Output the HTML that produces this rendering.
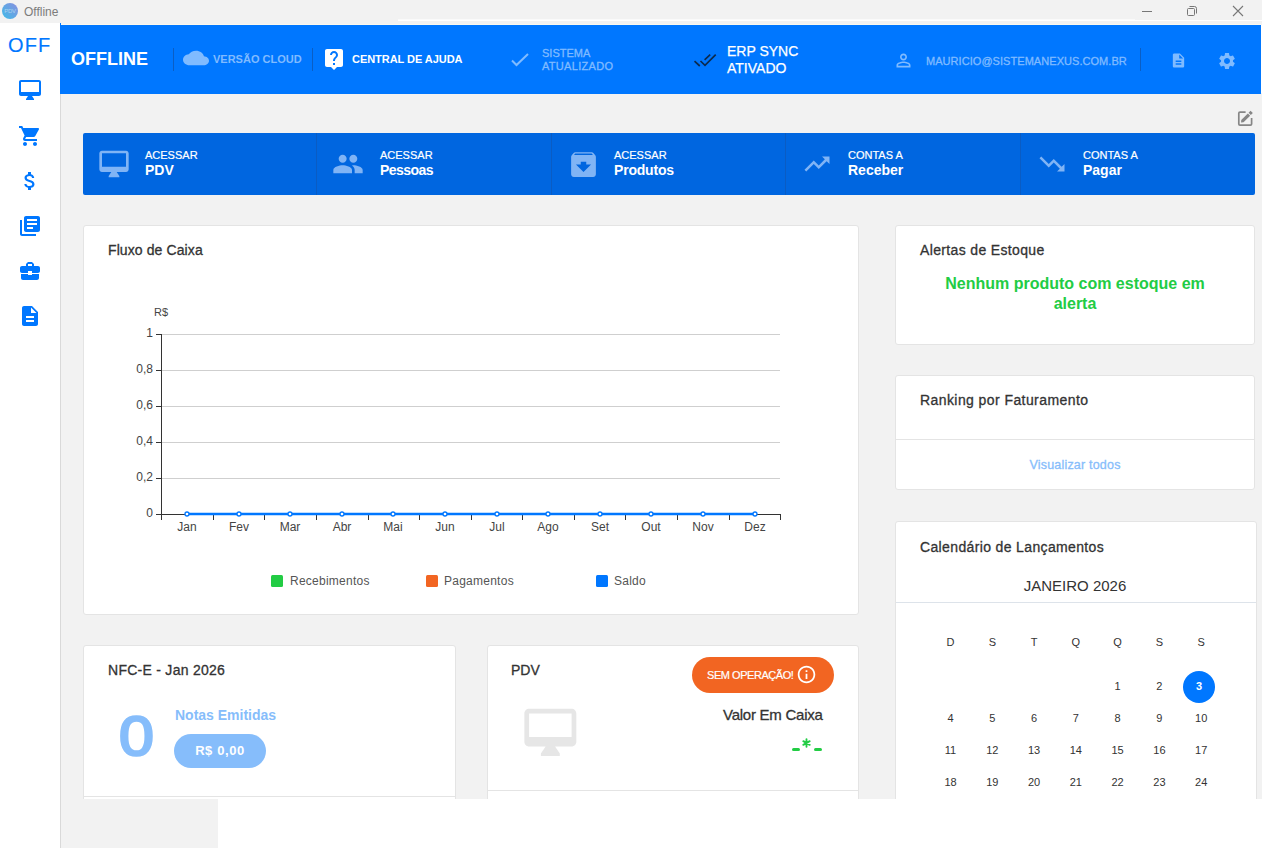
<!DOCTYPE html>
<html><head><meta charset="utf-8">
<style>
*{margin:0;padding:0;box-sizing:border-box}
html,body{width:1262px;height:848px;overflow:hidden;background:#fff;font-family:"Liberation Sans",sans-serif}
.a{position:absolute;white-space:nowrap;line-height:1}
svg.i{position:absolute;display:block}
#clip{position:absolute;left:0;top:0;width:1262px;height:799px;overflow:hidden}
#titlebar{position:absolute;left:0;top:0;width:1262px;height:25px;background:#f2f2f2}
#sidebar{position:absolute;left:0;top:23px;width:60px;height:825px;background:#fff}
#sbborder{position:absolute;left:60px;top:93px;width:1px;height:755px;background:#d9d9d9}
#content{position:absolute;left:61px;top:93px;width:1201px;height:706px;background:#f2f2f2}
#bottomgray{position:absolute;left:61px;top:799px;width:157px;height:49px;background:#f2f2f2}
#header{position:absolute;left:60px;top:25px;width:1201px;height:69px;background:#0077ff}
.hdiv{position:absolute;top:48px;width:1px;height:23px;background:#0b5ec4}
.panel{position:absolute;background:#fff;border:1px solid #e4e4e4;border-radius:3px}
.pt{position:absolute;font-size:14px;color:#333;line-height:1;white-space:nowrap;-webkit-text-stroke:0.3px #333}
.cd{position:absolute;width:1px;top:133px;height:62px;background:#0a5cc4}
.cl{position:absolute;font-size:11px;color:#fff;line-height:1;white-space:nowrap;-webkit-text-stroke:0.2px #fff}
.cb{position:absolute;font-size:14px;font-weight:bold;color:#fff;line-height:1;white-space:nowrap}
</style></head>
<body>
<div id="titlebar"></div>
<div id="sidebar"></div>
<div id="sbborder"></div>
<div id="bottomgray"></div>

<!-- title bar -->
<div class="a" style="left:2px;top:3px;width:16px;height:16px;border-radius:50%;background:linear-gradient(225deg,#8a8fdf,#3dbbe8)"></div><div class="a" style="left:2px;top:8px;width:16px;text-align:center;font-size:6px;color:#a9d3f0;letter-spacing:-0.2px">PDV</div>
<div class="a" style="left:24px;top:6px;font-size:12px;color:#7c7c7c">Offline</div>
<div class="a" style="left:1142px;top:11px;width:10px;height:1px;background:#777"></div>
<svg class="i" style="left:1186px;top:5px" width="12" height="12" viewBox="0 0 12 12"><rect x="1.5" y="3.5" width="7" height="7" rx="1" fill="none" stroke="#777" stroke-width="1"/><path d="M3.5 1.5h5a2 2 0 0 1 2 2v5" fill="none" stroke="#777" stroke-width="1"/></svg>
<svg class="i" style="left:1232px;top:5px" width="12" height="12" viewBox="0 0 12 12"><path d="M1 1L11 11M11 1L1 11" stroke="#777" stroke-width="1.1"/></svg>
<div class="a" style="left:398px;top:20px;width:864px;height:1px;background:#fff"></div><div class="a" style="left:398px;top:19px;width:737px;height:1px;background:#fafafa"></div>

<!-- sidebar -->
<div class="a" style="left:8px;top:35px;font-size:20px;color:#0077ff;letter-spacing:1.1px;-webkit-text-stroke:0.15px #0077ff">OFF</div>
<svg class="i" style="left:18px;top:78px" width="24" height="24" viewBox="0 0 24 24"><path fill="#0077ff" d="M21 2H3c-1.1 0-2 .9-2 2v12c0 1.1.9 2 2 2h7l-2 3v1h8v-1l-2-3h7c1.1 0 2-.9 2-2V4c0-1.1-.9-2-2-2zm0 12H3V4h18v10z"/></svg>
<svg class="i" style="left:18px;top:124px" width="24" height="24" viewBox="0 0 24 24"><path fill="#0077ff" d="M7 18c-1.1 0-1.99.9-1.99 2S5.9 22 7 22s2-.9 2-2-.9-2-2-2zM1 2v2h2l3.6 7.59-1.35 2.45c-.16.28-.25.61-.25.96 0 1.1.9 2 2 2h12v-2H7.42c-.14 0-.25-.11-.25-.25l.03-.12.9-1.63h7.45c.75 0 1.410-.41 1.75-1.03l3.58-6.49c.08-.14.12-.31.12-.48 0-.55-.45-1-1-1H5.21l-.94-2H1zm16 16c-1.1 0-1.99.9-1.99 2s.89 2 1.99 2 2-.9 2-2-.9-2-2-2z"/></svg>
<svg class="i" style="left:18px;top:169px" width="24" height="24" viewBox="0 0 24 24"><path fill="#0077ff" d="M11.8 10.9c-2.27-.59-3-1.2-3-2.15 0-1.09 1.01-1.850 2.7-1.85 1.78 0 2.44.85 2.5 2.1h2.21c-.07-1.72-1.12-3.3-3.21-3.81V3h-3v2.16c-1.94.42-3.5 1.68-3.5 3.61 0 2.31 1.91 3.46 4.7 4.13 2.5.6 3 1.48 3 2.410 0 .69-.49 1.79-2.7 1.79-2.06 0-2.87-.92-2.98-2.1h-2.2c.12 2.19 1.76 3.42 3.68 3.83V21h3v-2.15c1.95-.37 3.5-1.5 3.5-3.55 0-2.84-2.43-3.81-4.7-4.4z"/></svg>
<svg class="i" style="left:18px;top:214px" width="24" height="24" viewBox="0 0 24 24"><path fill="#0077ff" d="M4 6H2v14c0 1.1.9 2 2 2h14v-2H4V6zm16-4H8c-1.1 0-2 .9-2 2v12c0 1.1.9 2 2 2h12c1.1 0 2-.9 2-2V4c0-1.1-.9-2-2-2zm-1 9H9V9h10v2zm-4 4H9v-2h6v2zm4-8H9V5h10v2z"/></svg>
<svg class="i" style="left:18px;top:259px" width="24" height="24" viewBox="0 0 24 24"><path fill="#0077ff" d="M10 16v-1H3.01L3 19c0 1.11.89 2 2 2h14c1.11 0 2-.89 2-2v-4h-7v1h-4zm10-9h-4.01V5l-2-2h-4l-2 2v2H4c-1.1 0-2 .9-2 2v3c0 1.11.89 2 2 2h6v-2h4v2h6c1.1 0 2-.9 2-2V9c0-1.1-.9-2-2-2zm-6 0h-4V5h4v2z"/></svg>
<svg class="i" style="left:18px;top:304px" width="24" height="24" viewBox="0 0 24 24"><path fill="#0077ff" d="M14 2H6c-1.1 0-1.99.9-1.99 2L4 20c0 1.1.89 2 1.99 2H18c1.1 0 2-.9 2-2V8l-6-6zm2 16H8v-2h8v2zm0-4H8v-2h8v2zm-3-5V3.5L18.5 9H13z"/></svg>

<div id="clip">
<div id="content"></div>
<div id="header"></div>
<div class="a" style="left:61px;top:24px;width:1200px;height:1px;background:#fbf8ee"></div>
<div class="a" style="left:60px;top:23px;width:1px;height:2px;background:#0077ff"></div>

<!-- header -->
<div class="a" style="left:71px;top:50px;font-size:18px;font-weight:bold;color:#fff">OFFLINE</div>
<div class="hdiv" style="left:173px"></div>
<svg class="i" style="left:183px;top:47px" width="26" height="22" viewBox="0 0 24 24" preserveAspectRatio="none"><path fill="#80bbff" d="M19.35 10.04C18.67 6.59 15.64 4 12 4 9.11 4 6.6 5.64 5.35 8.04 2.34 8.36 0 10.91 0 14c0 3.31 2.69 6 6 6h13c2.76 0 5-2.24 5-5 0-2.64-2.05-4.78-4.65-4.96z"/></svg>
<div class="a" style="left:213px;top:54px;font-size:11px;font-weight:bold;color:#80bbff">VERSÃO CLOUD</div>
<div class="hdiv" style="left:312px"></div>
<svg class="i" style="left:322px;top:47px" width="24" height="24" viewBox="0 0 24 24"><path fill="#fff" d="M19 2H5c-1.11 0-2 .9-2 2v14c0 1.1.89 2 2 2h4l3 3 3-3h4c1.1 0 2-.9 2-2V4c0-1.1-.9-2-2-2zm-6 16h-2v-2h2v2zm2.07-7.75l-.9.92C13.45 11.9 13 12.5 13 14h-2v-.5c0-1.1.45-2.1 1.17-2.83l1.24-1.26c.37-.36.59-.86.59-1.41 0-1.1-.9-2-2-2s-2 .9-2 2H8c0-2.21 1.79-4 4-4s4 1.79 4 4c0 .88-.36 1.68-.93 2.25z"/></svg>
<div class="a" style="left:352px;top:54px;font-size:11px;font-weight:bold;color:#fff;letter-spacing:-0.05px">CENTRAL DE AJUDA</div>
<svg class="i" style="left:510px;top:52px" width="20" height="16" viewBox="0 0 20 16"><path d="M2 8.5L6.5 13L18 2" fill="none" stroke="#80bbff" stroke-width="2"/></svg>
<div class="a" style="left:542px;top:48px;font-size:11px;color:#80bbff;letter-spacing:0px;-webkit-text-stroke:0.3px #80bbff">SISTEMA</div>
<div class="a" style="left:542px;top:61px;font-size:11px;color:#80bbff;letter-spacing:0.3px;-webkit-text-stroke:0.3px #80bbff">ATUALIZADO</div>
<svg class="i" style="left:693px;top:52px" width="25" height="16" viewBox="0 0 25 16"><path d="M1.5 9.2L6.8 14M7.5 9L12 13.3L22.7 2.6M11.6 7.9L17.2 2.6" fill="none" stroke="#0c2b4f" stroke-width="1.7"/></svg>
<div class="a" style="left:727px;top:44px;font-size:14px;color:#fff;-webkit-text-stroke:0.25px #fff">ERP SYNC</div>
<div class="a" style="left:727px;top:61px;font-size:14px;color:#fff;-webkit-text-stroke:0.25px #fff">ATIVADO</div>
<svg class="i" style="left:893px;top:50px" width="21" height="21" viewBox="0 0 24 24"><path fill="#80bbff" d="M12 5.9c1.16 0 2.1.94 2.1 2.1s-.94 2.1-2.1 2.1S9.9 9.16 9.9 8s.94-2.1 2.1-2.1m0 9c2.97 0 6.1 1.46 6.1 2.1v1.1H5.9V17c0-.64 3.13-2.1 6.1-2.1M12 4C9.790 4 8 5.79 8 8s1.79 4 4 4 4-1.79 4-4-1.79-4-4-4zm0 9c-2.67 0-8 1.34-8 4v3h16v-3c0-2.66-5.33-4-8-4z"/></svg>
<div class="a" style="left:926px;top:56px;font-size:11px;color:#80bbff;letter-spacing:0.05px;-webkit-text-stroke:0.3px #80bbff">MAURICIO@SISTEMANEXUS.COM.BR</div>
<div class="hdiv" style="left:1140px"></div>
<svg class="i" style="left:1170px;top:52px" width="17" height="17" viewBox="0 0 24 24"><path fill="#80bbff" d="M14 2H6c-1.1 0-1.99.9-1.99 2L4 20c0 1.1.89 2 1.99 2H18c1.1 0 2-.9 2-2V8l-6-6zm2 16H8v-2h8v2zm0-4H8v-2h8v2zm-3-5V3.5L18.5 9H13z"/></svg>
<svg class="i" style="left:1217px;top:51px" width="20" height="20" viewBox="0 0 24 24"><path fill="#80bbff" d="M19.14 12.94c.04-.3.06-.61.06-.94 0-.32-.02-.64-.07-.94l2.03-1.58c.18-.14.23-.41.12-.61l-1.92-3.32c-.12-.22-.37-.29-.59-.22l-2.39.96c-.5-.38-1.03-.7-1.62-.94l-.36-2.54c-.04-.24-.24-.41-.48-.41h-3.84c-.24 0-.43.17-.47.41l-.36 2.54c-.59.24-1.13.57-1.62.94l-2.39-.96c-.22-.08-.47 0-.59.22L2.74 8.87c-.12.21-.08.47.12.61l2.03 1.58c-.05.3-.09.63-.09.94s.02.64.07.94l-2.030 1.58c-.18.14-.23.41-.12.61l1.92 3.32c.12.22.37.29.59.22l2.39-.96c.5.38 1.03.7 1.62.94l.36 2.54c.05.24.24.41.48.41h3.84c.24 0 .44-.17.47-.41l.36-2.54c.59-.24 1.13-.56 1.62-.94l2.39.96c.22.08.47 0 .59-.22l1.92-3.32c.12-.22.07-.47-.12-.61l-2.01-1.58zM12 15.6c-1.98 0-3.6-1.62-3.6-3.6s1.62-3.6 3.6-3.6 3.6 1.62 3.6 3.6-1.62 3.6-3.6 3.6z"/></svg>

<!-- edit icon -->
<svg class="i" style="left:1236px;top:109px" width="19" height="19" viewBox="0 0 19 19"><path d="M9.6 3.1H4a1.2 1.2 0 0 0-1.2 1.2V14.9a1.2 1.2 0 0 0 1.2 1.2H14.4a1.2 1.2 0 0 0 1.2-1.2V9.1" fill="none" stroke="#868686" stroke-width="1.7"/><path d="M5.27 11.07L11.87 4.47L14.13 6.73L7.53 13.33L5.0 13.6Z" fill="#868686"/><path d="M12.58 3.76L14.56 1.78L16.82 4.04L14.84 6.02Z" fill="#868686"/></svg>
<!-- card bar -->
<div class="a" style="left:83px;top:133px;width:1172px;height:62px;background:#0066e0;border-radius:2px"></div>
<div class="cd" style="left:316px"></div>
<div class="cd" style="left:551px"></div>
<div class="cd" style="left:785px"></div>
<div class="cd" style="left:1020px"></div>

<svg class="i" style="left:98px;top:148px" width="32" height="32" viewBox="0 0 24 24"><path fill="#80b4f5" d="M21 2H3c-1.1 0-2 .9-2 2v12c0 1.1.9 2 2 2h7l-2 3v1h8v-1l-2-3h7c1.1 0 2-.9 2-2V4c0-1.1-.9-2-2-2zm0 12H3V4h18v10z"/></svg>
<div class="cl" style="left:145px;top:150px">ACESSAR</div>
<div class="cb" style="left:145px;top:163px">PDV</div>
<svg class="i" style="left:332px;top:148px" width="32" height="32" viewBox="0 0 24 24"><path fill="#80b4f5" d="M16 11c1.66 0 2.99-1.34 2.99-3S17.66 5 16 5c-1.66 0-3 1.34-3 3s1.34 3 3 3zm-8 0c1.66 0 2.99-1.34 2.99-3S9.66 5 8 5C6.34 5 5 6.34 5 8s1.34 3 3 3zm0 2c-2.33 0-7 1.17-7 3.5V19h14v-2.5c0-2.33-4.67-3.5-7-3.5zm8 0c-.29 0-.62.02-.97.05 1.16.84 1.97 1.97 1.97 3.45V19h6v-2.5c0-2.33-4.67-3.5-7-3.5z"/></svg>
<div class="cl" style="left:380px;top:150px">ACESSAR</div>
<div class="cb" style="left:380px;top:163px;letter-spacing:-0.55px">Pessoas</div>
<svg class="i" style="left:566.5px;top:147.5px" width="33" height="33" viewBox="0 0 24 24"><path fill="#80b4f5" d="M20.54 5.23l-1.39-1.68C18.88 3.21 18.47 3 18 3H6c-.47 0-.88.21-1.16.55L3.46 5.23C3.17 5.57 3 6.02 3 6.5V19c0 1.1.9 2 2 2h14c1.1 0 2-.9 2-2V6.5c0-.48-.17-.93-.46-1.27zM12 17.5L6.5 12H10v-2h4v2h3.5L12 17.5zM5.12 5l.81-1h12l.94 1H5.12z"/></svg>
<div class="cl" style="left:614px;top:150px">ACESSAR</div>
<div class="cb" style="left:614px;top:163px;letter-spacing:-0.2px">Produtos</div>
<svg class="i" style="left:802px;top:149px" width="30" height="30" viewBox="0 0 24 24"><path fill="#80b4f5" d="M16 6l2.29 2.29-4.88 4.88-4-4L2 16.59 3.41 18l6-6 4 4 6.3-6.29L22 12V6z"/></svg>
<div class="cl" style="left:848px;top:150px">CONTAS A</div>
<div class="cb" style="left:848px;top:163px">Receber</div>
<svg class="i" style="left:1037px;top:149px" width="30" height="30" viewBox="0 0 24 24"><path fill="#80b4f5" d="M16 18l2.29-2.29-4.88-4.88-4 4L2 7.41 3.41 6l6 6 4-4 6.3 6.29L22 12v6z"/></svg>
<div class="cl" style="left:1083px;top:150px">CONTAS A</div>
<div class="cb" style="left:1083px;top:163px">Pagar</div>

<!-- panels -->
<div class="panel" style="left:83px;top:225px;width:776px;height:390px"></div>
<div class="pt" style="left:108px;top:243px;letter-spacing:0.1px">Fluxo de Caixa</div>

<svg class="i" style="left:0;top:0" width="1262" height="848" viewBox="0 0 1262 848" font-family="Liberation Sans, sans-serif">
 <g stroke="#cfcfcf" stroke-width="1">
  <path d="M161 334.5H780M161 370.5H780M161 406.5H780M161 442.5H780M161 478.5H780"/>
 </g>
 <g stroke="#333" stroke-width="1" fill="none">
  <path d="M161.5 334V520M161 514.5H781"/>
  <path d="M156 334.5H161M156 370.5H161M156 406.5H161M156 442.5H161M156 478.5H161M156 514.5H161"/>
  <path d="M213.5 514V520M264.5 514V520M316.5 514V520M368.5 514V520M419.5 514V520M471.5 514V520M522.5 514V520M574.5 514V520M625.5 514V520M677.5 514V520M729.5 514V520M780.5 514V520"/>
 </g>
 <g font-size="12" fill="#444" text-anchor="end">
  <text x="153" y="337">1</text><text x="153" y="373">0,8</text><text x="153" y="409">0,6</text><text x="153" y="445">0,4</text><text x="153" y="481">0,2</text><text x="153" y="517">0</text>
 </g>
 <text x="154" y="316" font-size="11" fill="#444">R$</text>
 <g font-size="12" fill="#444" text-anchor="middle">
  <text x="187" y="531">Jan</text><text x="239" y="531">Fev</text><text x="290" y="531">Mar</text><text x="342" y="531">Abr</text><text x="393" y="531">Mai</text><text x="445" y="531">Jun</text><text x="497" y="531">Jul</text><text x="548" y="531">Ago</text><text x="600" y="531">Set</text><text x="651" y="531">Out</text><text x="703" y="531">Nov</text><text x="755" y="531">Dez</text>
 </g>
 <path d="M187 514H755" stroke="#0077ff" stroke-width="2.4"/>
 <g fill="#fff" stroke="#0077ff" stroke-width="1.3">
  <circle cx="187" cy="514" r="2"/><circle cx="239" cy="514" r="2"/><circle cx="290" cy="514" r="2"/><circle cx="342" cy="514" r="2"/><circle cx="393" cy="514" r="2"/><circle cx="445" cy="514" r="2"/><circle cx="497" cy="514" r="2"/><circle cx="548" cy="514" r="2"/><circle cx="600" cy="514" r="2"/><circle cx="651" cy="514" r="2"/><circle cx="703" cy="514" r="2"/><circle cx="755" cy="514" r="2"/>
 </g>
 <rect x="271" y="575" width="12" height="12" rx="1.5" fill="#22cc44"/>
 <rect x="426" y="575" width="12" height="12" rx="1.5" fill="#f26522"/>
 <rect x="596" y="575" width="12" height="12" rx="1.5" fill="#0077ff"/>
 <g font-size="12" fill="#555" letter-spacing="0.25">
  <text x="290" y="585">Recebimentos</text><text x="444" y="585">Pagamentos</text><text x="614" y="585">Saldo</text>
 </g>
</svg>

<div class="panel" style="left:895px;top:225px;width:360px;height:120px"></div>
<div class="pt" style="left:920px;top:243px;letter-spacing:0.35px">Alertas de Estoque</div>
<div class="a" style="left:895px;top:274px;width:360px;text-align:center;font-size:16px;line-height:20px;font-weight:bold;color:#22cc44;white-space:normal;padding:0 40px">Nenhum produto com estoque em alerta</div>

<div class="panel" style="left:895px;top:375px;width:360px;height:115px"></div>
<div class="pt" style="left:920px;top:393px;letter-spacing:0.42px">Ranking por Faturamento</div>
<div class="a" style="left:896px;top:439px;width:358px;height:1px;background:#e4e4e4"></div>
<div class="a" style="left:895px;top:459px;width:360px;text-align:center;font-size:12.5px;color:#86bdfb;letter-spacing:0.2px;-webkit-text-stroke:0.3px #86bdfb">Visualizar todos</div>

<div class="panel" style="left:895px;top:521px;width:362px;height:300px"></div>
<div class="pt" style="left:920px;top:540px;letter-spacing:0.36px">Calendário de Lançamentos</div>
<div class="a" style="left:895px;top:578px;width:360px;text-align:center;font-size:15px;color:#333">JANEIRO 2026</div>
<div class="a" style="left:896px;top:602px;width:360px;height:1px;background:#dde3ea"></div>
<div class="a" style="left:1183px;top:671px;width:32px;height:32px;border-radius:50%;background:#0077ff"></div>
<svg class="i" style="left:0;top:0" width="1262" height="848" viewBox="0 0 1262 848" font-family="Liberation Sans, sans-serif">
 <g font-size="11" fill="#333" text-anchor="middle">
  <text x="950.5" y="646">D</text><text x="992.3" y="646">S</text><text x="1034" y="646">T</text><text x="1075.8" y="646">Q</text><text x="1117.6" y="646">Q</text><text x="1159.4" y="646">S</text><text x="1201.2" y="646">S</text>
  <text x="1117.6" y="690">1</text><text x="1159.4" y="690">2</text><text x="1199" y="690" fill="#fff" font-weight="bold">3</text>
  <text x="950.5" y="722">4</text><text x="992.3" y="722">5</text><text x="1034" y="722">6</text><text x="1075.8" y="722">7</text><text x="1117.6" y="722">8</text><text x="1159.4" y="722">9</text><text x="1201.2" y="722">10</text>
  <text x="950.5" y="754">11</text><text x="992.3" y="754">12</text><text x="1034" y="754">13</text><text x="1075.8" y="754">14</text><text x="1117.6" y="754">15</text><text x="1159.4" y="754">16</text><text x="1201.2" y="754">17</text>
  <text x="950.5" y="786">18</text><text x="992.3" y="786">19</text><text x="1034" y="786">20</text><text x="1075.8" y="786">21</text><text x="1117.6" y="786">22</text><text x="1159.4" y="786">23</text><text x="1201.2" y="786">24</text>
 </g>
</svg>

<div class="panel" style="left:83px;top:645px;width:373px;height:170px"></div>
<div class="pt" style="left:108px;top:663px;letter-spacing:0.27px">NFC-E - Jan 2026</div>
<div class="a" style="left:84px;top:796px;width:371px;height:1px;background:#e4e4e4"></div>
<div class="a" style="left:119px;top:708px;font-size:56px;color:#86bdfb;-webkit-text-stroke:2.4px #86bdfb;transform:scaleX(1.12);transform-origin:0 0">0</div>
<div class="a" style="left:175px;top:708px;font-size:14px;font-weight:bold;color:#86bdfb">Notas Emitidas</div>
<div class="a" style="left:174px;top:734px;width:92px;height:34px;border-radius:17px;background:#86bdfb;color:#fff;font-size:13px;font-weight:bold;text-align:center;line-height:34px;letter-spacing:0.6px">R$ 0,00</div>

<div class="panel" style="left:487px;top:645px;width:372px;height:170px"></div>
<div class="pt" style="left:511px;top:663px">PDV</div>
<div class="a" style="left:488px;top:790px;width:370px;height:1px;background:#e4e4e4"></div>
<div class="a" style="left:692px;top:657px;width:142px;height:36px;border-radius:18px;background:#f26522"></div>
<div class="a" style="left:707px;top:670px;font-size:11px;color:#fff;letter-spacing:-0.45px;-webkit-text-stroke:0.2px #fff">SEM OPERAÇÃO!</div>
<svg class="i" style="left:796px;top:664px" width="21" height="21" viewBox="0 0 24 24"><path fill="#fff" d="M11 7h2v2h-2zm0 4h2v6h-2zm1-9C6.48 2 2 6.48 2 12s4.48 10 10 10 10-4.48 10-10S17.52 2 12 2zm0 18c-4.41 0-8-3.59-8-8s3.59-8 8-8 8 3.590 8 8-3.59 8-8 8z"/></svg>
<svg class="i" style="left:521.6px;top:703.9px" width="56.7" height="56.7" viewBox="0 0 24 24"><path fill="#e6e6e6" d="M21 2H3c-1.1 0-2 .9-2 2v12c0 1.1.9 2 2 2h7l-2 3v1h8v-1l-2-3h7c1.1 0 2-.9 2-2V4c0-1.1-.9-2-2-2zm0 12H3V4h18v10z"/></svg>
<div class="a" style="left:723px;top:707px;font-size:15px;color:#333;letter-spacing:-0.25px;-webkit-text-stroke:0.3px #333">Valor Em Caixa</div>
<div class="a" style="left:792px;top:748px;width:8px;height:3px;border-radius:1.5px;background:#22cc44"></div><div class="a" style="left:814px;top:748px;width:8px;height:3px;border-radius:1.5px;background:#22cc44"></div><svg class="i" style="left:802px;top:738px" width="9" height="10" viewBox="0 0 9 10"><path d="M4.5 1.3V8.7M1.3 3.15L7.7 6.85M1.3 6.85L7.7 3.15" stroke="#22cc44" stroke-width="1.9" stroke-linecap="round"/></svg>
</div>
</body></html>
